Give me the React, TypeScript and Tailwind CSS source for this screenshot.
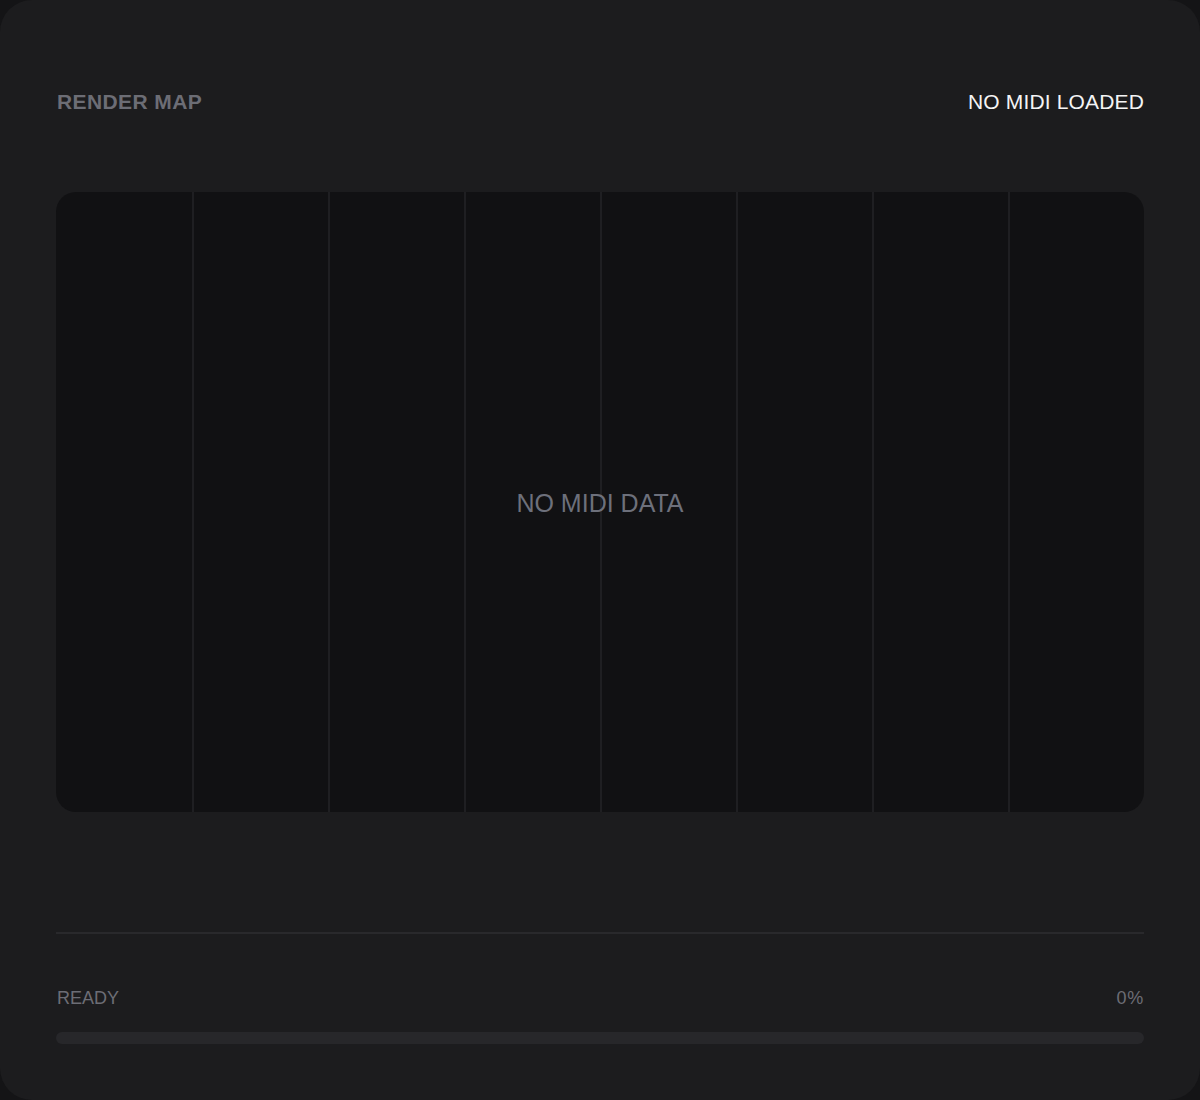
export default function App() {
  const columns = Array.from({ length: 8 });

  return (
    <div className="min-h-[1100px] w-[1200px] bg-[#141416] font-['Liberation_Sans',Arial,sans-serif]">
      <div className="flex h-[1100px] w-[1200px] flex-col rounded-[32px] bg-[#1c1c1e] px-[56px] pb-[56px]">
        {/* header */}
        <div className="flex h-[148px] items-end justify-between pb-[34px]">
          <span className="pl-px text-[21px] leading-[24px] font-bold tracking-[0.4px] text-[#6c6d75]">
            RENDER MAP
          </span>
          <span className="text-[21px] leading-[24px] font-medium tracking-[0.15px] text-[#f4f4f5]">
            NO MIDI LOADED
          </span>
        </div>

        {/* piano roll */}
        <div className="relative mt-[44px] h-[620px] overflow-hidden rounded-[20px] bg-[#111113]">
          <div className="grid h-full grid-cols-8">
            {columns.map((_, i) => (
              <div
                key={i}
                className={i === 0 ? 'h-full' : 'h-full border-l-2 border-[#1f1f22]'}
              />
            ))}
          </div>
          <div className="absolute inset-0 flex items-center justify-center pt-[2px]">
            <span className="text-[25px] leading-[28px] text-[#6d707b]">NO MIDI DATA</span>
          </div>
        </div>

        <div className="mt-[120px] border-t-2 border-[#29292c]" />

        {/* status */}
        <div className="mt-[50px] flex h-[28px] items-center justify-between text-[18px] text-[#6c6d75]">
          <span className="pl-px">READY</span>
          <span className="tracking-[0.8px]">0%</span>
        </div>
        <div className="mt-[20px] h-[12px] w-full rounded-full bg-[#27272a]" />
      </div>
    </div>
  );
}
